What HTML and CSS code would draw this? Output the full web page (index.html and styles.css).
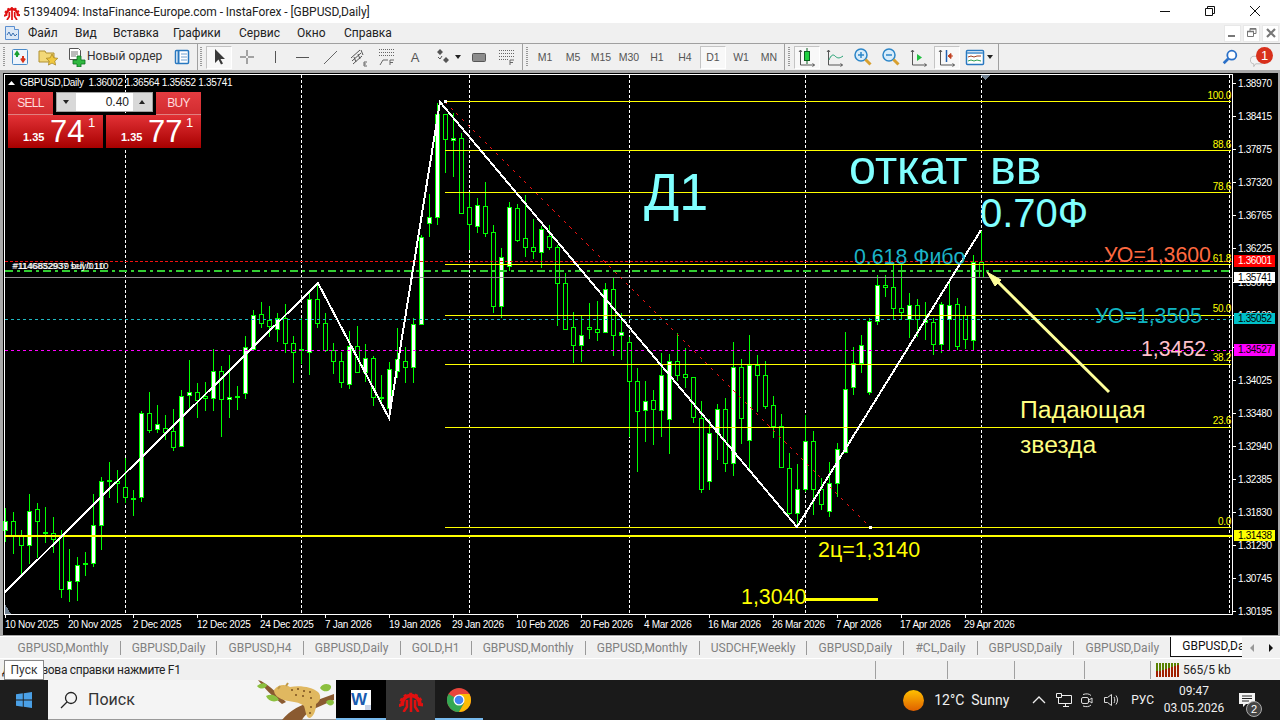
FILE: index.html
```html
<!DOCTYPE html>
<html lang="ru">
<head>
<meta charset="utf-8">
<title>InstaForex GBPUSD,Daily</title>
<link rel="stylesheet" href="styles.css">
</head>
<body>
<header class="titlebar">
  <svg class="appicon" viewBox="0 0 16 16"><path class="g-arch" d="M2.200 12A5.900 5.900 0 1 1 13.800 12"/><path class="g-teeth" d="M.8 12.500A7.300 7.300 0 1 1 15.200 12.500"/><path class="g-fork" d="M8 5.500V16M5.300 8V12.500L3 16M10.700 8V12.500L13 16"/></svg>
  <span class="title">51394094: InstaFinance-Europe.com - InstaForex - [GBPUSD,Daily]</span>
  <div class="winbtns">
    <svg viewBox="0 0 10 10"><path d="M0 5.500h10" stroke="#111" fill="none"/></svg>
    <svg viewBox="0 0 10 10"><path d="M.5 2.500h7v7h-7zM2.500 2.500v-2h7v7h-2" stroke="#111" fill="none"/></svg>
    <svg viewBox="0 0 10 10"><path d="M0 0l10 10M10 0L0 10" stroke="#111" fill="none"/></svg>
  </div>
</header>

<nav class="menubar">
  <svg class="menuicon" viewBox="0 0 16 16"><path fill="#dce8f6" stroke="#5b8fd0" d="M1.500 1.500h9v3h4v10h-13z"/><path d="M3 10l2-3 2 4 2-3 2 3 2-2" stroke="#3a6fb0" fill="none"/></svg>
  <span class="menuitem m1">Файл</span>
  <span class="menuitem m2">Вид</span>
  <span class="menuitem m3">Вставка</span>
  <span class="menuitem m4">Графики</span>
  <span class="menuitem m5">Сервис</span>
  <span class="menuitem m6">Окно</span>
  <span class="menuitem m7">Справка</span>
  <div class="mdibtns">
    <span class="mdi"><svg viewBox="0 0 12 12"><path d="M1 9h7" stroke="#777" stroke-width="2"/></svg></span>
    <span class="mdi"><svg viewBox="0 0 12 12"><path d="M1.500 4.500h6v5h-6zM4 4.500v-3h6v5H7.500" fill="none" stroke="#777"/><path d="M1 4.500h7M4 2h6" stroke="#777" stroke-width="1.500"/></svg></span>
    <span class="mdi"><svg viewBox="0 0 12 12"><path d="M2 2l8 8M10 2l-8 8" stroke="#777" stroke-width="2.200"/></svg></span>
  </div>
</nav>

<div class="toolbar">
  <span class="grip"></span>
  <span class="tb"><svg viewBox="0 0 20 20"><rect x="2.500" y="2.500" width="15" height="15" rx="1" fill="#eef4fb" stroke="#4a8ac8"/><path d="M7 10V6M5 8l2-3 2 3" stroke="#18a030" stroke-width="2" fill="none"/><path d="M13 9v4M11 11.500l2 3 2-3" stroke="#d83018" stroke-width="2" fill="none"/></svg></span>
  <span class="tb"><svg viewBox="0 0 20 20"><path d="M1 4h6l1 2h8v9H1z" fill="#f2d878" stroke="#b09030"/><path d="M14 7l1.800 3.800 4 .5-3 2.800.8 4-3.600-2-3.600 2 .8-4-3-2.800 4-.5z" fill="#f0c840" stroke="#a08020" stroke-width=".7"/></svg></span>
  <span class="tb wide"><svg viewBox="0 0 20 20"><path d="M3.500 1.500h9l2 2v9h-11z" fill="#fff" stroke="#555"/><path d="M5 5h7M5 7h7M5 9h5" stroke="#777"/><path d="M11 9h4v4h4v4h-4v3h-4v-3H7v-4h4z" fill="#30b840" stroke="#0a7020" stroke-width=".8"/></svg><span class="tblabel">Новый ордер</span></span>
  <span class="tb"><svg viewBox="0 0 20 20"><rect x="3.500" y="3.500" width="13" height="13" rx="1" fill="#fff" stroke="#2878c0" stroke-width="1.500"/><path d="M6.500 4v12" stroke="#2878c0" stroke-width="2"/><path d="M9 7h6M9 10h6M9 13h6" stroke="#70a0d0"/></svg></span>
  <span class="sep"></span><span class="grip g1"></span>
  <span class="tb sel"><svg viewBox="0 0 20 20"><path d="M6 2v14l3.500-3.500 2.500 5 2-1-2.500-4.500H16z" fill="#3a3a3a"/></svg></span>
  <span class="tb"><svg viewBox="0 0 20 20"><path d="M10 3v6M10 11v6M3 10h6M11 10h6" stroke="#555" fill="none"/></svg></span>
  <span class="tb"><svg viewBox="0 0 20 20"><path d="M10.500 4v12" stroke="#555" fill="none"/></svg></span>
  <span class="tb"><svg viewBox="0 0 20 20"><path d="M3 10.500h13" stroke="#555" fill="none"/></svg></span>
  <span class="tb"><svg viewBox="0 0 20 20"><path d="M3 17L16 4" stroke="#666" fill="none"/></svg></span>
  <span class="tb"><svg viewBox="0 0 20 20"><path d="M2 11l9-8M3 14l9-8M4 17l9-8M7 15l-2-5M11 12L9 7M14 8l-2-5" stroke="#555" fill="none"/><path d="M15 19v-4h3M15 17h2M15 19h3" stroke="#666" fill="none"/></svg></span>
  <span class="tb"><svg viewBox="0 0 20 20"><path d="M2 2.500h15M2 5.500h15M2 8.500h15" stroke="#666" stroke-dasharray="1 1" fill="none"/><path d="M3 18l3-5h5" stroke="#666" fill="none"/><path d="M13 18v-5h4M13 15.500h3" stroke="#666" fill="none"/></svg></span>
  <span class="tb"><span class="tbtext big">A</span></span>
  <span class="tb arrows"><svg viewBox="0 0 20 20"><path d="M7 2l3 3-3 3-3-3zM13 10l3 3-3 3-3-3z" fill="#555"/><path d="M5 10l2 2 2-3" stroke="#555" fill="none"/></svg><i class="drop"></i></span>
  <span class="tb"><svg viewBox="0 0 20 20"><rect x="3.500" y="6.500" width="13" height="8" rx="1" fill="#8c8c8c" stroke="#555"/></svg></span>
  <span class="tb"><svg viewBox="0 0 20 20"><path d="M2 3.500h15M2 6.500h15M2 9.500h15M2 12.500h9" stroke="#666" stroke-dasharray="1 1" fill="none"/><path d="M13 18v-5h4M13 15.500h3" stroke="#666" fill="none"/></svg></span>
  <span class="sep"></span><span class="grip g2"></span>
  <span class="tb"><span class="tbtext">M1</span></span>
  <span class="tb"><span class="tbtext">M5</span></span>
  <span class="tb"><span class="tbtext">M15</span></span>
  <span class="tb"><span class="tbtext">M30</span></span>
  <span class="tb"><span class="tbtext">H1</span></span>
  <span class="tb"><span class="tbtext">H4</span></span>
  <span class="tb sel"><span class="tbtext">D1</span></span>
  <span class="tb"><span class="tbtext">W1</span></span>
  <span class="tb"><span class="tbtext">MN</span></span>
  <span class="sep"></span><span class="grip g2"></span>
  <span class="tb sel"><svg viewBox="0 0 20 20"><path d="M10 1v3M10 14v3" stroke="#0a6020"/><rect x="7.500" y="4.500" width="5" height="9" fill="#20d040" stroke="#0a6020"/><path d="M3.500 3v15h14M2 5l1.500-2L5 5M15.500 16.500l2 1.500-2 1.500" stroke="#555" fill="none"/></svg></span>
  <span class="tb"><svg viewBox="0 0 20 20"><path d="M3.500 3v15h14M2 5l1.500-2L5 5M15.500 16.500l2 1.500-2 1.500" stroke="#555" fill="none"/><path d="M4 13c2-5 4-6 6-4s4 3 8 0" stroke="#20a070" fill="none"/></svg></span>
  <span class="tb"><svg viewBox="0 0 20 20"><circle cx="8" cy="8" r="6" fill="#d8ecfa" stroke="#2c86c8" stroke-width="1.500"/><path d="M5 8h6M8 5v6" stroke="#2c86c8" stroke-width="1.500"/><path d="M12.500 12.500l5 5" stroke="#d8a030" stroke-width="3"/></svg></span>
  <span class="tb"><svg viewBox="0 0 20 20"><circle cx="8" cy="8" r="6" fill="#d8ecfa" stroke="#2c86c8" stroke-width="1.500"/><path d="M5 8h6" stroke="#2c86c8" stroke-width="1.500"/><path d="M12.500 12.500l5 5" stroke="#d8a030" stroke-width="3"/></svg></span>
  <span class="tb"><svg viewBox="0 0 20 20"><path d="M3.500 3v15h14M2 5l1.500-2L5 5M15.500 16.500l2 1.500-2 1.500" stroke="#555" fill="none"/><path d="M8 7v7l5-3.500z" fill="#20c040"/></svg></span>
  <span class="tb sel"><svg viewBox="0 0 20 20"><path d="M3.500 3v15h14M2 5l1.500-2L5 5M15.500 16.500l2 1.500-2 1.500" stroke="#555" fill="none"/><path d="M9.500 3v12" stroke="#2060b0" stroke-width="1.500"/><path d="M16 9h-3M11 9l3-2.500v5z" fill="#c04020" stroke="#c04020"/></svg></span>
  <span class="tb arrows"><svg viewBox="0 0 20 20"><rect x="1.500" y="3.500" width="17" height="14" rx="1" fill="#fff" stroke="#2878c0" stroke-width="1.500"/><path d="M2 6h16" stroke="#70a8d8" stroke-width="2"/><path d="M3 10l3-1 3 1 3-1 4 0" stroke="#a04020" fill="none"/><path d="M3 14l3-1 3 1 3-1 4 1" stroke="#30a050" fill="none"/></svg><i class="drop"></i></span>
  <span class="sep"></span>
  <span class="tbright">
    <svg class="search" viewBox="0 0 20 20"><circle cx="12" cy="8" r="5" fill="#fff" stroke="#2a70c8" stroke-width="2"/><path d="M8 12l-5 5" stroke="#2a70c8" stroke-width="3"/></svg>
    <span class="notif"><svg viewBox="0 0 16 12"><path d="M5 1h7a3 3 0 0 1 0 8H6l-2 3V9A4 4 0 0 1 5 1z" fill="#f4f4f4" stroke="#bbb"/></svg><b>1</b></span>
  </span>
</div>

<main class="chartwrap">
  <svg class="chart" viewBox="3 73 1275 562">
    <g class="grid">
      <path d="M125.500 75V614M301.500 75V614M469.500 75V614M629.500 75V614M805.500 75V614M981.500 75V614M1229.500 75V614"/>
    </g>
    <g class="candles">
      <path class="wick" d="M5.500 508V542M13.500 512V554M21.500 530V574M29.500 494V564M37.500 503V558M45.500 507V543M53.500 517V553M61.500 530V598M69.500 549V602M77.500 557V601M85.500 552V576M93.500 494V567M101.500 477V550M109.500 462V498M117.500 470V503M125.500 458V503M133.500 490V516M141.500 411V502M149.500 392V433M157.500 405V433M165.500 415V440M173.500 409V451M181.500 390V447M189.500 360V408M197.500 383V418M205.500 382V411M213.500 349V411M221.500 366V437M229.500 355V418M237.500 386V410M245.500 336V399M253.500 310V350M261.500 302V328M269.500 306V337M277.500 313V342M285.500 304V353M293.500 336V383M301.500 318V364M309.500 293V375M317.500 283V328M325.500 313V352M333.500 343V374M341.500 352V388M349.500 331V389M357.500 326V372M365.500 344V382M373.500 356V406M381.500 375V402M389.500 362V418M397.500 328V378M405.500 347V383M413.500 318V383M421.500 235V325M429.500 194V237M437.500 103V225M445.500 114V173M453.500 113V177M461.500 133V214M469.500 193V250M477.500 198V233M485.500 182V237M493.500 225V313M501.500 248V318M509.500 202V271M517.500 204V242M525.500 195V257M533.500 219V259M541.500 226V268M549.500 225V250M557.500 245V326M565.500 273V330M573.500 312V363M581.500 315V362M589.500 303V339M597.500 301V341M605.500 283V333M613.500 278V356M621.500 313V360M629.500 337V437M637.500 368V472M645.500 381V442M653.500 390V445M661.500 353V437M669.500 354V454M677.500 333V381M685.500 348V388M693.500 377V423M701.500 401V493M709.500 419V490M717.500 404V460M725.500 398V472M733.500 342V476M741.500 359V444M749.500 335V470M757.500 355V412M765.500 361V409M773.500 396V438M781.500 414V467M789.500 453V515M797.500 464V527M805.500 415V492M813.500 431V515M821.500 478V510M829.500 462V517M837.500 443V497M845.500 332V453M853.500 347V395M861.500 335V373M869.500 318V395M877.500 275V325M885.500 275V297M893.500 265V320M901.500 265V320M909.500 293V338M917.500 299V337M925.500 302V340M933.500 318V355M941.500 302V353M949.500 282V350M957.500 298V350M965.500 306V349M973.500 255V350M981.500 230V277"/>
      <path class="bear" d="M11.500 521.500h4v14h-4zM19.500 536.500h4v9h-4zM35.500 509.500h4v12h-4zM51.500 533.500h4v6h-4zM59.500 535.500h4v54h-4zM115.500 481.500h4v2h-4zM123.500 487.500h4v10h-4zM147.500 413.500h4v17h-4zM163.500 428.500h4v4h-4zM171.500 431.500h4v16h-4zM195.500 392.500h4v8h-4zM203.500 396.500h4v2h-4zM219.500 371.500h4v28h-4zM259.500 314.500h4v9h-4zM267.500 320.500h4v6h-4zM283.500 318.500h4v25h-4zM291.500 343.500h4v9h-4zM315.500 299.500h4v24h-4zM323.500 323.500h4v27h-4zM331.500 350.500h4v11h-4zM339.500 361.500h4v21h-4zM355.500 346.500h4v26h-4zM371.500 358.500h4v39h-4zM403.500 361.500h4v6h-4zM443.500 114.500h4v25h-4zM459.500 138.500h4v75h-4zM467.500 207.500h4v17h-4zM483.500 206.500h4v27h-4zM491.500 232.500h4v74h-4zM515.500 208.500h4v32h-4zM523.500 238.500h4v9h-4zM531.500 247.500h4v4h-4zM547.500 236.500h4v11h-4zM555.500 247.500h4v36h-4zM563.500 283.500h4v46h-4zM571.500 327.500h4v18h-4zM587.500 327.500h4v2h-4zM595.500 329.500h4v3h-4zM611.500 289.500h4v46h-4zM627.500 342.500h4v39h-4zM635.500 381.500h4v30h-4zM651.500 400.500h4v9h-4zM675.500 361.500h4v14h-4zM683.500 374.500h4v3h-4zM691.500 377.500h4v40h-4zM699.500 418.500h4v71h-4zM723.500 409.500h4v54h-4zM739.500 367.500h4v51h-4zM755.500 365.500h4v10h-4zM763.500 375.500h4v31h-4zM771.500 405.500h4v21h-4zM779.500 426.500h4v41h-4zM787.500 468.500h4v45h-4zM811.500 441.500h4v48h-4zM819.500 489.500h4v15h-4zM883.500 285.500h4v2h-4zM891.500 287.500h4v21h-4zM899.500 308.500h4v4h-4zM915.500 305.500h4v14h-4zM931.500 322.500h4v22h-4zM955.500 304.500h4v42h-4zM963.500 315.500h4v24h-4zM979.500 262.500h4v15h-4z"/>
      <path class="bull" d="M3.500 521.500h4v9h-4zM27.500 511.500h4v34h-4zM43.500 532.500h4v1h-4zM67.500 581.500h4v8h-4zM75.500 565.500h4v16h-4zM83.500 563.500h4v1h-4zM91.500 525.500h4v38h-4zM99.500 481.500h4v44h-4zM107.500 480.500h4v1h-4zM131.500 498.500h4v1h-4zM139.500 413.500h4v84h-4zM155.500 424.500h4v5h-4zM179.500 396.500h4v50h-4zM187.500 392.500h4v3h-4zM211.500 371.500h4v27h-4zM227.500 397.500h4v2h-4zM235.500 396.500h4v1h-4zM243.500 347.500h4v46h-4zM251.500 315.500h4v34h-4zM275.500 318.500h4v11h-4zM299.500 349.500h4v1h-4zM307.500 299.500h4v53h-4zM347.500 346.500h4v38h-4zM363.500 358.500h4v14h-4zM379.500 397.500h4v1h-4zM387.500 369.500h4v39h-4zM395.500 359.500h4v12h-4zM411.500 324.500h4v43h-4zM419.500 237.500h4v87h-4zM427.500 217.500h4v6h-4zM435.500 114.500h4v103h-4zM451.500 138.500h4v2h-4zM475.500 205.500h4v21h-4zM499.500 257.500h4v49h-4zM507.500 207.500h4v59h-4zM539.500 229.500h4v23h-4zM579.500 335.500h4v10h-4zM603.500 289.500h4v43h-4zM619.500 332.500h4v3h-4zM643.500 401.500h4v9h-4zM659.500 375.500h4v35h-4zM667.500 361.500h4v58h-4zM707.500 433.500h4v48h-4zM715.500 409.500h4v23h-4zM731.500 367.500h4v96h-4zM747.500 365.500h4v75h-4zM795.500 489.500h4v24h-4zM803.500 441.500h4v48h-4zM827.500 483.500h4v28h-4zM835.500 449.500h4v34h-4zM843.500 389.500h4v63h-4zM851.500 363.500h4v24h-4zM859.500 345.500h4v18h-4zM867.500 321.500h4v71h-4zM875.500 285.500h4v36h-4zM907.500 305.500h4v14h-4zM923.500 320.500h4v2h-4zM939.500 304.500h4v40h-4zM947.500 305.500h4v14h-4zM971.500 262.500h4v78h-4z"/>
    </g>
    <g class="hlines">
      <path class="l-red" d="M5 261.500H1232"/>
      <path class="l-green" d="M5 271H1232"/>
      <path class="l-gray" d="M5 277.500H1232"/>
      <path class="l-cyan" d="M5 319.500H1232"/>
      <path class="l-mag" d="M5 350.500H1232"/>
      <path class="l-fib" d="M445 101.500H1231M445 150.500H1231M445 192.500H1231M445 264.500H1231M445 315.500H1231M445 364.500H1231M445 427.500H1231M445 527.500H1231"/>
      <path class="l-bold" d="M5 536H1232"/>
      <path class="l-short" d="M805 599H878"/>
      <path class="l-trend" d="M445 102L870 527"/>
      <path class="l-zig" d="M4 593L318 283L389 418L440 102L797 527L981 230"/>
      <rect class="dot" x="444" y="100" width="3" height="3"/>
      <rect class="dot" x="869" y="526" width="3" height="3"/>
    </g>
    <g class="frame">
      <rect x="4.500" y="74.500" width="1228" height="540"/>
      <path d="M1233 83.500h3M1233 116.500h3M1233 149.500h3M1233 182.500h3M1233 215.500h3M1233 248.500h3M1233 282.500h3M1233 315.500h3M1233 347.500h3M1233 380.500h3M1233 413.500h3M1233 446.500h3M1233 479.500h3M1233 512.500h3M1233 545.500h3M1233 578.500h3M1233 611.500h3M5.500 615v3M69.500 615v3M133.500 615v3M197.500 615v3M261.500 615v3M325.500 615v3M389.500 615v3M453.500 615v3M517.500 615v3M581.500 615v3M645.500 615v3M709.500 615v3M773.500 615v3M837.500 615v3M901.500 615v3M965.500 615v3"/>
      <path class="corner" d="M980 75h11l-5.500 5z"/>
      <path class="corner" d="M5 604v10h6z"/>
    </g>
    <g class="axis">
      <text x="1238" y="87">1.38970</text><text x="1238" y="120">1.38415</text><text x="1238" y="153">1.37875</text><text x="1238" y="186">1.37320</text><text x="1238" y="219">1.36765</text><text x="1238" y="252">1.36225</text><text x="1238" y="286">1.35670</text><text x="1238" y="319">1.35130</text><text x="1238" y="384">1.34025</text><text x="1238" y="417">1.33480</text><text x="1238" y="450">1.32940</text><text x="1238" y="483">1.32385</text><text x="1238" y="516">1.31830</text><text x="1238" y="549">1.31290</text><text x="1238" y="582">1.30745</text><text x="1238" y="615">1.30195</text>
    </g>
    <g class="tags">
      <rect class="t-red" x="1234" y="255" width="41" height="12"/><text class="tw" x="1238" y="264">1.36001</text>
      <rect class="t-white" x="1234" y="272" width="41" height="11"/><text x="1238" y="281">1.35741</text>
      <rect class="t-cyan" x="1234" y="313" width="41" height="11"/><text x="1238" y="322">1.35052</text>
      <rect class="t-mag" x="1234" y="344" width="41" height="12"/><text x="1238" y="353">1.34527</text>
      <rect class="t-yel" x="1234" y="530" width="41" height="11"/><text x="1238" y="539">1.31438</text>
    </g>
    <g class="dates">
      <text x="5" y="628">10 Nov 2025</text><text x="68" y="628">20 Nov 2025</text><text x="133" y="628">2 Dec 2025</text><text x="197" y="628">12 Dec 2025</text><text x="260" y="628">24 Dec 2025</text><text x="325" y="628">7 Jan 2026</text><text x="389" y="628">19 Jan 2026</text><text x="452" y="628">29 Jan 2026</text><text x="516" y="628">10 Feb 2026</text><text x="580" y="628">20 Feb 2026</text><text x="644" y="628">4 Mar 2026</text><text x="708" y="628">16 Mar 2026</text><text x="772" y="628">26 Mar 2026</text><text x="836" y="628">7 Apr 2026</text><text x="900" y="628">17 Apr 2026</text><text x="964" y="628">29 Apr 2026</text>
    </g>
    <g class="fiblabels">
      <text x="1231" y="99">100.0</text><text x="1231" y="148">88.6</text><text x="1231" y="190">78.6</text><text x="1231" y="262">61.8</text><text x="1231" y="312">50.0</text><text x="1231" y="361">38.2</text><text x="1231" y="424">23.6</text><text x="1231" y="525">0.0</text>
    </g>
    <text class="hdr" x="20" y="86">GBPUSD,Daily&#160; 1.36002 1.36564 1.35652 1.35741</text>
    <path class="hdrtri" d="M8 85h7l-3.500-4z"/>
    <text class="ordr" x="12" y="269">#1146832937 sell 0.10</text>
    <text class="ordr o2" x="13" y="269">#1146852939 buy/0110</text>
    <g class="notes">
      <text class="n-d1" x="644" y="210">Д1</text>
      <text class="n-ot" x="849" y="184">откат вв</text>
      <text class="n-70" x="980" y="227">0.70Ф</text>
      <text class="n-fibo" x="854" y="264">0.618 Фибо</text>
      <text class="n-uo1" x="1104" y="262">УО=1,3600</text>
      <text class="n-uo2" x="1095" y="323">УО=1,3505</text>
      <text class="n-pink" x="1141" y="356">1,3452</text>
      <text class="n-yel" x="818" y="557">2ц=1,3140</text>
      <text class="n-yel" x="741" y="604">1,3040</text>
      <text class="n-star" x="1020" y="418">Падающая</text>
      <text class="n-star" x="1020" y="453">звезда</text>
    </g>
    <path class="arrowline" d="M1109 392L994 278"/>
    <path class="arrowhead" d="M987 272L1001 280L995 286z"/>
  </svg>

  <div class="trade">
    <div class="trade-top">
      <span class="side">SELL</span>
      <div class="spin"><i class="spdn"></i><b>0.40</b><i class="spup"></i></div>
      <span class="side">BUY</span>
    </div>
    <div class="trade-bot">
      <div class="quote"><small>1.35</small><big>74</big><sup>1</sup></div>
      <div class="quote"><small>1.35</small><big>77</big><sup>1</sup></div>
    </div>
  </div>
</main>

<div class="tabs">
  <span class="tab">GBPUSD,Monthly</span>
  <span class="tab">GBPUSD,Daily</span>
  <span class="tab">GBPUSD,H4</span>
  <span class="tab">GBPUSD,Daily</span>
  <span class="tab">GOLD,H1</span>
  <span class="tab">GBPUSD,Monthly</span>
  <span class="tab">GBPUSD,Monthly</span>
  <span class="tab">USDCHF,Weekly</span>
  <span class="tab">GBPUSD,Daily</span>
  <span class="tab">#CL,Daily</span>
  <span class="tab">GBPUSD,Daily</span>
  <span class="tab last">GBPUSD,Daily</span>
  <span class="tab active">GBPUSD,Da</span>
  <span class="tabnav"><i class="nl"></i><i class="nr"></i></span>
</div>

<div class="status">
  <span class="hint">Для вызова справки нажмите F1</span>
  <span class="tip">Пуск</span>
  <span class="cell c1"></span><span class="cell c2"></span><span class="cell c3"></span><span class="cell c4"></span>
  <span class="cell c5"><svg viewBox="0 0 24 14"><path d="M1 0v14M4 0v13M7 0v12M10 0v11M13 0v10M16 0v9M19 0v8M22 0v7" stroke="#5a8000" stroke-width="2"/><path d="M1 8v6M4 8v6M7 7v7M10 6v8M13 5v9M16 4v10M19 3v11M22 2v12" stroke="#a02000" stroke-width="2"/></svg><span>565/5 kb</span></span>
</div>

<footer class="taskbar">
  <span class="start"><svg viewBox="0 0 16 16"><path fill="#4aa0e6" d="M0 2.300l6.800-1V7.600H0zM7.700 1.200L16 0v7.600H7.700zM0 8.400h6.800v6.300l-6.800-1zM7.700 8.400H16V16l-8.300-1.200z"/></svg></span>
  <div class="searchbox">
    <svg class="sicon" viewBox="0 0 18 18"><circle cx="11" cy="7" r="5.500" fill="none" stroke="#222" stroke-width="1.300"/><path d="M7 11l-6 6" stroke="#222" stroke-width="1.300"/></svg>
    <span class="stext">Поиск</span>
    <svg class="leopard" viewBox="0 0 80 40"><path d="M2 0C10 2 20 12 30 22L26 24C16 16 8 8 2 0zM26 40C34 30 46 24 56 22L78 14V20L60 28C52 32 48 36 46 40z" fill="#8a5a30"/><path d="M18 10C22 4 30 4 34 7C44 5 56 7 62 12C66 16 64 22 60 24C60 30 58 36 54 38C50 38 50 32 48 26C44 22 36 22 28 20C22 18 18 15 18 10z" fill="#e0b860"/><path d="M22 9l2-3M30 6l2-3" stroke="#c09a48" stroke-width="2"/><circle cx="36" cy="10" r="1" fill="#7a5020"/><circle cx="42" cy="9" r="1" fill="#7a5020"/><circle cx="48" cy="11" r="1" fill="#7a5020"/><circle cx="54" cy="12" r="1" fill="#7a5020"/><circle cx="40" cy="15" r="1" fill="#7a5020"/><circle cx="47" cy="16" r="1" fill="#7a5020"/><circle cx="55" cy="18" r="1" fill="#7a5020"/><circle cx="55" cy="27" r="1" fill="#7a5020"/><circle cx="54" cy="33" r="1" fill="#7a5020"/><path d="M1 6c3-3 8-4 10-1-1 4-7 5-10 1zM10 16c4-2 10-2 13 4-5 3-11 1-13-4zM64 8c2-5 9-5 11-2 1 5-7 8-11 2zM70 22c2-3 7-3 8 0 0 4-6 5-8 0z" fill="#8cc040"/></svg>
  </div>
  <span class="tbtn word"><svg viewBox="0 0 22 22"><path d="M1 1h20v20H1z" fill="#fff"/><path d="M15 16h6v5h-6z" fill="#c8d4e8"/><text x="1" y="16" class="w">W</text></svg></span>
  <span class="tbtn insta"><svg viewBox="0 0 16 16"><path class="g-arch" d="M2.200 12A5.900 5.900 0 1 1 13.800 12"/><path class="g-teeth" d="M.8 12.500A7.300 7.300 0 1 1 15.200 12.500"/><path class="g-fork" d="M8 5.500V16M5.300 8V12.500L3 16M10.700 8V12.500L13 16"/></svg></span>
  <span class="tbtn chrome"><svg viewBox="0 0 24 24"><circle cx="12" cy="12" r="12" fill="#e8453c"/><path d="M12 12L1.600 6A12 12 0 0 0 12 24l5.200-9z" fill="#34a853"/><path d="M12 12h12a12 12 0 0 1-12 12l5.200-9z" fill="#fbbc05"/><path d="M12 6h10.400A12 12 0 0 1 24 12h-7z" fill="#fbbc05"/><circle cx="12" cy="12" r="5.500" fill="#fff"/><circle cx="12" cy="12" r="4.300" fill="#4285f4"/></svg></span>
  <div class="tray">
    <span class="sun"></span>
    <span class="weather">12°C&#160; Sunny</span>
    <svg class="ti t1" viewBox="0 0 14 8"><path d="M1 7l6-6 6 6" fill="none" stroke="#eee" stroke-width="1.300"/></svg>
    <svg class="ti t2" viewBox="0 0 16 16"><path d="M.5 1.500h5v4h-5zM5.500 3.500h10v8h-13v-6M7 14.500h6M9.500 11.500v3" fill="none" stroke="#eee"/></svg>
    <svg class="ti t3" viewBox="0 0 14 16"><rect x="1.500" y="5.500" width="7" height="6" rx="1.500" fill="none" stroke="#ddd"/><path d="M9 8l3-2v5l-3-2M3 2.500c3-1 6-1 8 1M3 14c3 1 6 1 8-1" fill="none" stroke="#ddd"/></svg>
    <svg class="ti t4" viewBox="0 0 16 16"><path d="M1.500 5.500h3l4-3v11l-4-3h-3zM11 5c1 2 1 4 0 6M13 3.500c2 3 2 6 0 9" fill="none" stroke="#ddd"/></svg>
    <span class="lang">РУС</span>
    <span class="clock"><span>09:47</span><span>03.05.2026</span></span>
    <span class="notify"><svg viewBox="0 0 16 16"><path d="M0 1h16v11H7l-3 3v-3H0z" fill="#f4f4f4"/><path d="M3 4h10M3 6.500h10M3 9h7" stroke="#222"/></svg><b>2</b></span>
  </div>
</footer>
</body>
</html>
```
FILE: styles.css
```css
* { box-sizing: border-box; }
html, body { margin: 0; padding: 0; }
body {
  width: 1280px; height: 720px; overflow: hidden;
  display: flex; flex-direction: column;
  font-family: Roboto, "Liberation Sans", sans-serif;
  font-size: 12px; color: #222; background: #f0f0f0;
}

/* red gear logo */
.g-arch { fill: none; stroke: #e01010; stroke-width: 2.400; }
.g-teeth { fill: none; stroke: #e01010; stroke-width: 1.800; stroke-dasharray: 2 1.800; }
.g-fork { fill: none; stroke: #e01010; stroke-width: 1.700; }

/* title bar */
.titlebar { height: 23px; background: #fff; display: flex; align-items: center; flex: none; }
.appicon { width: 16px; height: 16px; margin: 0 3px 0 4px; }
.title { font-size: 12px; color: #222; letter-spacing: -.06px; }
.winbtns { margin-left: auto; display: flex; margin-bottom: 2px; }
.winbtns svg { width: 10px; height: 10px; margin-left: 35px; }
.winbtns svg:last-child { margin-right: 20px; }

/* menu */
.menubar { height: 21px; flex: none; background: #f0f0f0; border-bottom: 1px solid #a0a0a0; display: flex; align-items: center; }
.menuicon { width: 16px; height: 16px; margin: 0 8px 0 4px; }
.menuitem { font-size: 12px; color: #222; flex: none; }
.m1 { width: 47px; } .m2 { width: 38px; } .m3 { width: 60px; }
.m4 { width: 66px; } .m5 { width: 58px; } .m6 { width: 47px; }
.mdibtns { margin-left: auto; display: flex; gap: 2px; margin-right: 1px; }
.mdi { width: 17px; height: 17px; background: #fff; border: 1px solid #e8e8e8; display: flex; align-items: center; justify-content: center; }
.mdi svg { width: 12px; height: 12px; }

/* toolbar */
.toolbar { height: 26px; flex: none; background: #f0f0f0; display: flex; align-items: center; padding-left: 3px; }
.grip { width: 2px; height: 20px; margin-right: 1px; background: repeating-linear-gradient(#999 0 1px, transparent 1px 2px); }
.grip.g1 { margin: 0 3px 0 1px; }
.grip.g2 { margin: 0 3px 0 2px; height: 20px; }
.sep { width: 1px; height: 26px; background: #a0a0a0; margin: 0 1px 0 1px; }
.tb { width: 26px; height: 23px; margin: 0 1px; flex: none; border: 1px solid transparent; display: flex; align-items: center; justify-content: center; }
.tb svg { width: 20px; height: 20px; flex: none; }
.tb.sel { border-color: #c4c4c4 #fff #fff #c4c4c4; background: #f8f8f8; }
.tb.wide { width: 104px; justify-content: flex-start; padding-left: 2px; }
.tb.arrows { width: 34px; justify-content: flex-start; gap: 2px; padding-left: 2px; }
.tblabel { font-size: 12px; color: #333; margin-left: 1px; position: relative; top: -1px; }
.tbtext { font-size: 10.500px; color: #555; font-family: "Liberation Sans", sans-serif; }
.tbtext.big { font-size: 13px; }
.drop { display: inline-block; border: 3px solid transparent; border-top: 4px solid #222; border-bottom: 0; }
.tbright { margin-left: auto; display: flex; align-items: center; }
.search { width: 18px; height: 18px; margin-right: 10px; }
.notif { position: relative; width: 26px; height: 22px; margin-right: 5px; display: block; }
.notif svg { position: absolute; left: 1px; top: 9px; width: 15px; height: 12px; }
.notif b { position: absolute; right: 2px; top: 1px; width: 17px; height: 17px; border-radius: 50%; background: #d8301c; color: #fff; font: 400 13px/17px "Liberation Sans", sans-serif; text-align: center; }

/* chart */
.chartwrap { position: relative; flex: none; height: 566px; background: #a8a8a8; padding: 3px 2px 1px 3px; }
.chart { display: block; width: 1275px; height: 562px; background: #000; }
.chart text { font-family: "Liberation Sans", sans-serif; }
.grid path { stroke: #fff; stroke-width: 1; stroke-dasharray: 3 2; fill: none; shape-rendering: crispEdges; }
.wick { stroke: #00ff00; fill: none; shape-rendering: crispEdges; }
.bear { stroke: #00ff00; fill: #000; shape-rendering: crispEdges; }
.bull { stroke: #00ff00; fill: #fff; shape-rendering: crispEdges; }
.hlines path { fill: none; }
.l-red { stroke: #f01010; stroke-dasharray: 3 2; shape-rendering: crispEdges; }
.l-green { stroke: #32cd32; stroke-width: 2; stroke-dasharray: 8 4 3 4; shape-rendering: crispEdges; }
.l-gray { stroke: #909090; shape-rendering: crispEdges; }
.l-cyan { stroke: #20b8c0; stroke-dasharray: 3 3; shape-rendering: crispEdges; }
.l-mag { stroke: #ff00ff; stroke-dasharray: 3 3; shape-rendering: crispEdges; }
.l-fib { stroke: #ffff00; shape-rendering: crispEdges; }
.l-bold { stroke: #ffff00; stroke-width: 2; shape-rendering: crispEdges; }
.l-short { stroke: #ffff00; stroke-width: 3; shape-rendering: crispEdges; }
.l-trend { stroke: #f01010; stroke-dasharray: 3 5; shape-rendering: crispEdges; }
.l-zig { stroke: #fff; stroke-width: 2; shape-rendering: crispEdges; }
.dot { fill: #fff; }
.frame rect, .frame path { fill: none; stroke: #fff; shape-rendering: crispEdges; }
.frame path.corner { fill: #708090; stroke: none; }
.axis text, .tags text { font-size: 10px; letter-spacing: -.35px; fill: #fff; }
.tags text { fill: #000; }
.tags text.tw { fill: #fff; }
.t-red { fill: #f00; } .t-white { fill: #fff; } .t-cyan { fill: #00c0c8; } .t-mag { fill: #f0f; } .t-yel { fill: #ff0; }
.dates text { font-size: 10px; letter-spacing: -.3px; fill: #fff; }
.fiblabels text { font-size: 10px; letter-spacing: -.3px; fill: #ff0; text-anchor: end; }
.hdr { font-size: 10px; fill: #fff; letter-spacing: -.3px; }
.hdrtri { fill: #fff; }
.ordr { font-size: 9.500px; letter-spacing: -.15px; fill: #ddd; }
.ordr.o2 { fill: #fff; }
.n-d1 { font-size: 52px; fill: #80ffff; }
.n-ot { font-size: 48.500px; word-spacing: 9px; fill: #80ffff; }
.n-70 { font-size: 40px; fill: #80ffff; }
.n-fibo { font-size: 21.300px; fill: #1cb4c8; }
.n-uo1 { font-size: 21.300px; fill: #ff6a40; }
.n-uo2 { font-size: 21.300px; fill: #10b4c0; }
.n-pink { font-size: 21.300px; fill: #ffc0cb; }
.n-yel { font-size: 21.400px; fill: #ff0; }
.n-star { font-size: 24.700px; fill: #ffff80; }
.arrowline { stroke: #ffff9a; stroke-width: 3; fill: none; }
.arrowhead { fill: #ffff9a; stroke: #ffff9a; }

/* one-click trade panel */
.trade { position: absolute; left: 8px; top: 22px; width: 193px; display: flex; flex-direction: column; font-family: "Liberation Sans", sans-serif; }
.trade-top { display: flex; align-items: flex-start; height: 23px; justify-content: space-between; }
.side { width: 45px; height: 23px; color: #ffdcdc; font-size: 12px; letter-spacing: -.7px; line-height: 22px; text-align: center; background: linear-gradient(#e43c40, #d22c30); border-bottom: 1px solid #e08080; }
.spin { width: 97px; height: 20px; background: #d8d8d8; border: 1px solid #a0a0a0; display: flex; align-items: stretch; }
.spin i { width: 19px; position: relative; }
.spin i::after { content: ""; position: absolute; left: 6px; top: 7px; border: 3px solid transparent; }
.spdn::after { border-top: 4px solid #222 !important; border-bottom: 0 !important; }
.spup::after { border-bottom: 4px solid #222 !important; border-top: 0 !important; }
.spin b { flex: 1; background: #fff; font-weight: 400; font-size: 12px; line-height: 18px; color: #222; text-align: right; padding-right: 4px; }
.trade-bot { display: flex; justify-content: space-between; }
.quote { width: 95px; height: 33px; background: linear-gradient(#e23236, #a80000); color: #fff; display: flex; align-items: flex-start; padding-left: 15px; }
.quote small { font-size: 11px; font-weight: 700; line-height: 12px; margin-top: 16px; width: 27px; }
.quote big { font-size: 31px; line-height: 31px; margin-top: 1px; width: 38px; }
.quote sup { font-size: 13px; line-height: 13px; margin-top: 1px; }

/* tabs */
.tabs { height: 22px; flex: none; background: #f0f0f0; display: flex; align-items: center; padding-left: 6.500px; overflow: hidden; position: relative; border-top: 1px solid #fff; }
.tab { font-size: 12px; color: #808080; padding: 0 11.100px; border-right: 1px solid #999; line-height: 14px; flex: none; }
.tab.last { border-right: 0; }
.tab.active { color: #111; background: #fff; border: 1px solid #111; border-top: 0; border-right: 0; height: 20px; align-self: flex-start; line-height: 19px; padding: 0 11px; }
.tabnav { position: absolute; left: 1242px; top: 0; width: 38px; height: 21px; background: #f0f0f0; display: flex; align-items: center; justify-content: space-around; }
.nl { border: 4px solid transparent; border-right: 4px solid #999; border-left: 0; }
.nr { border: 4px solid transparent; border-left: 4px solid #111; border-right: 0; }

/* status */
.status { height: 22px; flex: none; position: relative; background: #f0f0f0; border-top: 1px solid #fff; display: flex; align-items: center; padding-left: 2px; }
.hint { font-size: 12px; letter-spacing: -.3px; color: #222; width: 873px; flex: none; }
.tip { position: absolute; left: 4px; top: 1px; height: 20px; width: 40px; background: #fff; border: 1px solid #888; font-size: 12px; line-height: 18px; text-align: center; color: #333; }
.cell { height: 18px; border-left: 1px solid #a0a0a0; flex: none; }
.c1 { width: 72px; } .c2 { width: 67px; } .c3 { width: 70px; } .c4 { width: 66px; }
.c5 { display: flex; align-items: center; gap: 3px; padding-left: 5px; font-size: 12px; color: #222; }
.c5 svg { width: 24px; height: 14px; }

/* taskbar */
.taskbar { height: 40px; flex: none; background: #1a1a1a; display: flex; align-items: stretch; color: #f0f0f0; }
.start { width: 48px; background: #1e1e1e; display: flex; align-items: center; justify-content: center; }
.start svg { width: 16px; height: 16px; }
.searchbox { width: 288px; background: #f4f4f4; border-bottom: 1px solid #999; display: flex; align-items: center; position: relative; }
.sicon { width: 18px; height: 18px; margin-left: 12px; }
.stext { font-size: 16px; color: #333; margin-left: 10px; }
.leopard { position: absolute; right: 0; top: 0; width: 80px; height: 40px; }
.tbtn { width: 50px; display: flex; align-items: center; justify-content: center; }
.tbtn svg { width: 22px; height: 22px; }
.word { background: #000; box-shadow: inset 0 -2px 0 #76b9ed; }
.w { font: 700 17px "Liberation Sans", sans-serif; fill: #1a5cb0; }
.insta { background: #333; width: 49px; }
.insta svg { width: 24px; height: 24px; }
.chrome { width: 48px; box-shadow: inset 0 -2px 0 #76b9ed; }
.chrome svg { width: 24px; height: 24px; }
.tray { margin-left: auto; display: flex; align-items: center; position: relative; }
.sun { width: 21px; height: 21px; border-radius: 50%; background: linear-gradient(#ffc000, #e06000); flex: none; }
.weather { font-size: 14px; margin: 0 8px 0 10px; width: 90px; flex: none; }
.ti { flex: none; }
.t1 { width: 14px; height: 8px; margin-right: 10px; }
.t2 { width: 16px; height: 16px; margin-right: 8px; }
.t3 { width: 14px; height: 16px; margin-right: 9px; }
.t4 { width: 16px; height: 16px; margin-right: 12px; }
.lang { font-size: 12px; margin-right: 6px; }
.clock { display: flex; flex-direction: column; align-items: center; font-size: 12px; line-height: 17px; width: 68px; margin-right: 4px; }
.notify { position: relative; width: 48px; height: 40px; display: block; }
.notify svg { position: absolute; left: 7px; top: 12px; width: 16px; height: 16px; }
.notify b { position: absolute; left: 14px; top: 21px; width: 16px; height: 16px; border-radius: 50%; background: #444; border: 1px solid #aaa; color: #fff; font: 400 11px/14px "Liberation Sans", sans-serif; text-align: center; }
```
